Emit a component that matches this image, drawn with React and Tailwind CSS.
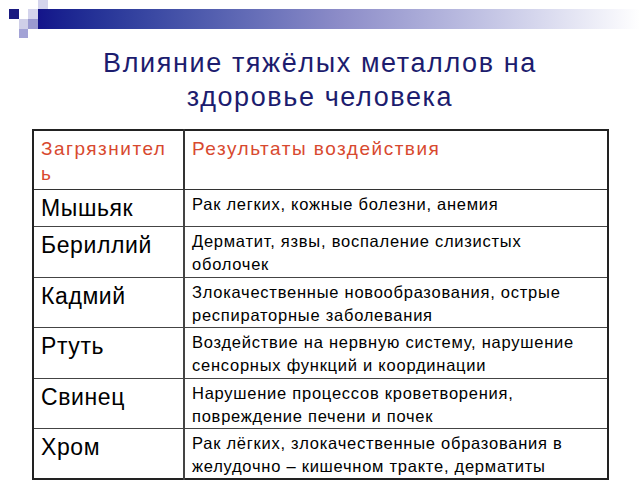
import React from 'react';

const rows = [
  { name: 'Мышьяк', text: ['Рак легких, кожные болезни, анемия'], h: 'h-[37px]' },
  { name: 'Бериллий', text: ['Дерматит, язвы, воспаление слизистых', 'оболочек'], h: 'h-[51px]' },
  { name: 'Кадмий', text: ['Злокачественные новообразования, острые', 'респираторные заболевания'], h: 'h-[50px]' },
  { name: 'Ртуть', text: ['Воздействие на нервную систему, нарушение', 'сенсорных функций и координации'], h: 'h-[51px]' },
  { name: 'Свинец', text: ['Нарушение процессов кроветворения,', 'повреждение печени и почек'], h: 'h-[50px]' },
  { name: 'Хром', text: ['Рак лёгких, злокачественные образования в', 'желудочно – кишечном тракте, дерматиты'], h: 'h-[51px]' },
];

// Декор слайда: сетка квадратиков + градиентная полоса
const Corner = () => (
  <div className="grid h-[40px] grid-cols-[10px_9px_10px_10px_1fr] grid-rows-[9px_10px_10px_9px] pl-[9px]">
    <div className="col-start-1 row-start-2 bg-[#1a1a80]" />
    <div className="col-start-3 row-start-2 bg-[#d4d4ec]" />
    <div className="col-start-4 row-start-1 bg-[#d4d4ec]" />
    <div className="col-start-2 row-start-3 bg-[#cfcfe8]" />
    <div className="col-start-3 row-start-3 bg-[#9a9ad0]" />
    <div className="col-start-2 row-start-4 bg-[#a3a3d6]" />
    <div className="col-start-4 col-span-2 row-start-2 row-span-2 bg-gradient-to-r from-[#14148a] via-[#8c8cc8] to-white" />
  </div>
);

export default function App() {
  return (
    <div className="w-[640px] h-[480px] overflow-hidden bg-white font-['Liberation_Sans',Arial,sans-serif]">
      <Corner />
      <h1 className="mt-[6px] text-center text-[27px] leading-[34px] tracking-[1.6px] text-[#1c1c6e]">
        Влияние тяжёлых металлов на
        <br />
        здоровье человека
      </h1>
      <table className="ml-[32px] mt-[15px] w-[577px] border-collapse border-2 border-[#222] table-fixed">
        <colgroup>
          <col className="w-[151px]" />
          <col />
        </colgroup>
        <tbody>
          <tr className="h-[59px]">
            <td className="border-r-2 border-b border-[#333] align-top px-[7px] pt-[5px] text-[19px] leading-[25px] tracking-[1.5px] text-[#d8492f]">
              Загрязнител
              <br />ь
            </td>
            <td className="border-b border-[#333] align-top px-[7px] pt-[5px] text-[19px] leading-[25px] tracking-[1.5px] text-[#d8492f]">
              Результаты воздействия
            </td>
          </tr>
          {rows.map((r) => (
            <tr key={r.name} className={r.h}>
              <td className="border-r-2 border-b border-[#444] align-top px-[7px] pt-[4px] text-[23px] leading-[28px] tracking-[0.6px] text-black">
                {r.name}
              </td>
              <td className="border-b border-[#444] align-top px-[7px] pt-[3px] text-[16.5px] leading-[23px] tracking-[0.75px] text-black">
                {r.text.map((t) => (
                  <div key={t}>{t}</div>
                ))}
              </td>
            </tr>
          ))}
        </tbody>
      </table>
    </div>
  );
}
